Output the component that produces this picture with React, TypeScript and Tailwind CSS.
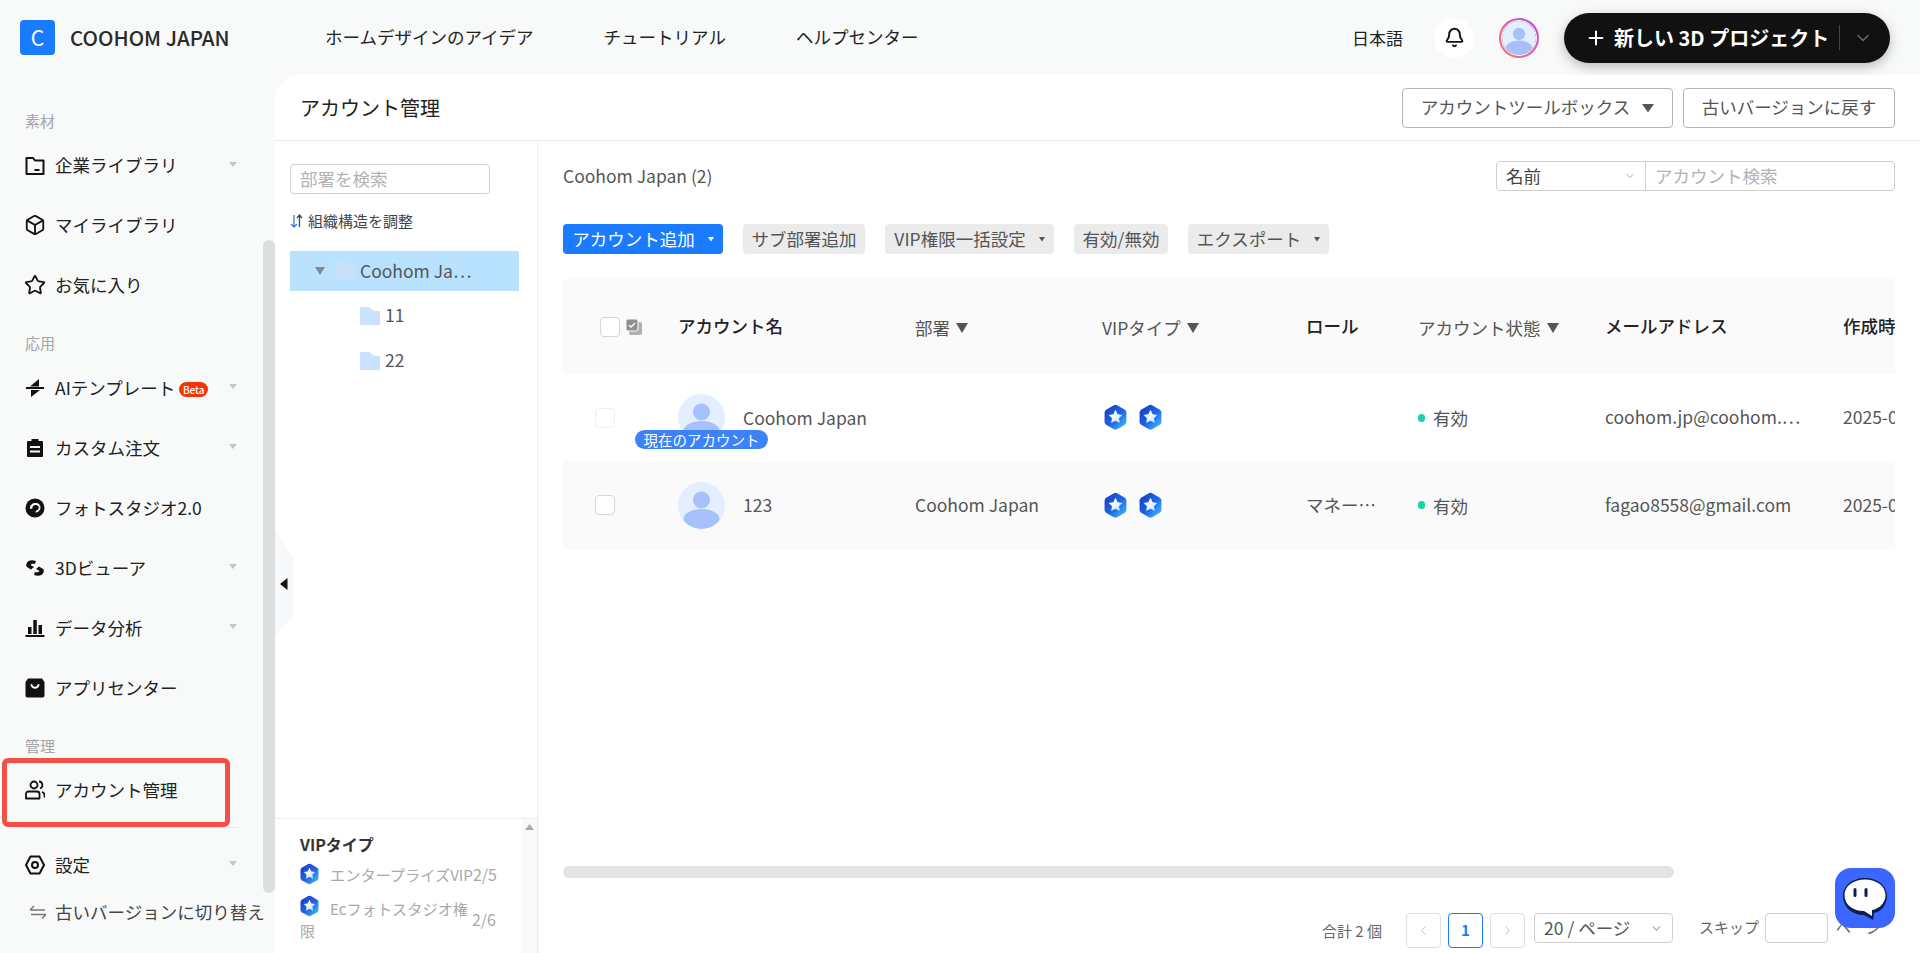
import React from "react";
import { Box, Star, Bell, ChevronDown, ChevronLeft, ChevronRight, Plus } from "lucide-react";

const FONT = "[font-family:'Noto_Sans_CJK_JP','Noto_Sans',sans-serif]";

const Caret = () => (
  <svg width="10" height="7" viewBox="0 0 10 7" className="ml-auto mr-[37px] mb-[3px] shrink-0">
    <path d="M1 1h8L5 6z" fill="#c4c6c8" />
  </svg>
);

const I = ({ children }: { children: React.ReactNode }) => (
  <svg width="20" height="20" viewBox="0 0 20 20" className="shrink-0">{children}</svg>
);

const icons: Record<string, React.ReactNode> = {
  folder: (
    <I>
      <path d="M1.500 2h6.500l2 2.500h8.500v13.500h-17z" fill="none" stroke="#111" strokeWidth="2" strokeLinejoin="round" />
      <path d="M9.500 14h5" stroke="#111" strokeWidth="2" />
    </I>
  ),
  box: <Box size={22} strokeWidth={2} color="#111" className="-mx-[1px] shrink-0" />,
  star: <Star size={22} strokeWidth={2} color="#111" className="-mx-[1px] shrink-0" />,
  ai: (
    <I>
      <path d="M1 10h18" stroke="#111" strokeWidth="2" />
      <path d="M14 1v7.500H5z" fill="#111" />
      <path d="M6 19v-7h9z" fill="#111" />
    </I>
  ),
  clip: (
    <I>
      <path d="M6.500 1h7v2H17a1 1 0 0 1 1 1v14a1 1 0 0 1-1 1H3a1 1 0 0 1-1-1V4a1 1 0 0 1 1-1h3.500z" fill="#111" />
      <path d="M5 9h10M5 13.500h10" stroke="#f8f9f9" strokeWidth="2" />
    </I>
  ),
  photo: (
    <I>
      <circle cx="10" cy="10" r="9.500" fill="#111" />
      <circle cx="10.500" cy="9.500" r="2.200" fill="#111" />
      <path d="M5 11c-.5-3.500 2-6 5.500-6 3 0 5 2 5 4.500 0 3-2.500 5-5 5l.5-2c2 0 2.700-1.500 2.700-3S12.500 7 10.500 7 7 8.500 7.500 10.500z" fill="#f8f9f9" />
    </I>
  ),
  d3: (
    <I>
      <path d="M1.500 5.500C3 2 7 1.500 11 3l-1 3C8 5.500 6.500 5.500 5.500 7l3.500 2-3 2.500-4-2.500c-1-1-1-2.500-.5-3.500z" fill="#111" />
      <path d="M18.500 14.500C17 18 13 18.500 9 17l1-3c2 .5 3.500.5 4.500-1L11 11l3-2.500 4 2.500c1 1 1 2.500.5 3.500z" fill="#111" />
    </I>
  ),
  chart: (
    <I>
      <path d="M.5 17h19v2H.5z" fill="#111" />
      <path d="M3 9h3.500v7H3zM8.300 2h3.500v14H8.300zM13.500 7H17v9h-3.500z" fill="#111" />
    </I>
  ),
  bag: (
    <I>
      <path d="M3 .5h14l2.500 3.500v13.500a2 2 0 0 1-2 2h-15a2 2 0 0 1-2-2V4z" fill="#111" />
      <path d="M6.500 7c1 3.500 6 3.500 7 0" fill="none" stroke="#f8f9f9" strokeWidth="2" strokeLinecap="round" />
    </I>
  ),
  user: (
    <I>
      <circle cx="9" cy="5" r="3.500" fill="none" stroke="#111" strokeWidth="1.800" />
      <path d="M1 18.500V14a2.500 2.500 0 0 1 2.500-2.500H12a2.500 2.500 0 0 1 2.500 2.500v4.500z" fill="none" stroke="#111" strokeWidth="1.800" strokeLinejoin="round" />
      <path d="M14 1.500a3.500 3.500 0 0 1 1 6.800M17 12c1.500.5 2.500 1.500 2.500 3v2.500" fill="none" stroke="#111" strokeWidth="1.800" />
    </I>
  ),
  gear: (
    <I>
      <path d="M5.500 1.500h9l4.500 8.500-4.500 8.500h-9L1 10z" fill="none" stroke="#111" strokeWidth="2" strokeLinejoin="round" />
      <circle cx="10" cy="10" r="3" fill="none" stroke="#111" strokeWidth="2" />
    </I>
  ),
};

const NavItem = ({ icon, label, caret, beta, h = "h-[60px]" }: { icon: string; label: string; caret?: boolean; beta?: boolean; h?: string }) => (
  <div className={`flex items-center pl-[25px] text-[17.500px] text-[#222] ${h}`}>
    {icons[icon]}
    <span className="ml-[10px] whitespace-nowrap">{label}</span>
    {beta && (
      <span className="ml-[4px] mt-[3px] flex h-[15px] w-[29px] items-center justify-center rounded-full bg-[#f43404] text-[10px] font-medium text-white">Beta</span>
    )}
    {caret && <Caret />}
  </div>
);

const SectionLabel = ({ children }: { children: React.ReactNode }) => (
  <div className="flex h-[43px] items-end pb-[4px] pl-[25px] text-[15px] text-[#a2a4a6]">{children}</div>
);

const Badge = ({ size = 20, id }: { size?: number; id: string }) => (
  <svg width={size} height={size * 1.150} viewBox="0 0 20 23" className="block shrink-0">
    <defs>
      <linearGradient id={id} x1="0.100" y1="0.100" x2="0.900" y2="0.900">
        <stop offset="0" stopColor="#1a40c8" />
        <stop offset="0.550" stopColor="#1f66e6" />
        <stop offset="1" stopColor="#3fb4f6" />
      </linearGradient>
      <linearGradient id={`${id}s`} x1="0" y1="0" x2="1" y2="1">
        <stop offset="0.300" stopColor="#ffffff" />
        <stop offset="1" stopColor="#b5defa" />
      </linearGradient>
    </defs>
    <path d="M8.600 1.100a3 3 0 0 1 2.800 0l6.800 3.800a3 3 0 0 1 1.300 2.400v8.400a3 3 0 0 1-1.300 2.400l-6.800 3.800a3 3 0 0 1-2.800 0l-6.800-3.800a3 3 0 0 1-1.300-2.400V7.300a3 3 0 0 1 1.300-2.400z" fill={`url(#${id})`} />
    <path d="M10 5l1.900 3.900 4.100.6-3 2.900.8 4.200-3.800-2-3.800 2 .8-4.200-3-2.900 4.100-.6z" fill={`url(#${id}s)`} />
  </svg>
);

const Avatar = ({ id, size = 47 }: { id: string; size?: number }) => (
  <svg width={size} height={size} viewBox="0 0 47 47" className="block shrink-0">
    <defs>
      <clipPath id={id}><circle cx="23.500" cy="23.500" r="23.500" /></clipPath>
    </defs>
    <circle cx="23.500" cy="23.500" r="23.500" fill="#e3eeff" />
    <circle cx="23.500" cy="18" r="8.500" fill="#a6c0fb" />
    <ellipse cx="23.500" cy="37" rx="18" ry="10" fill="#a6c0fb" clipPath={`url(#${id})`} />
  </svg>
);

const Folder = ({ pale }: { pale?: boolean }) => (
  <svg width="20" height="18" viewBox="0 0 20 18" className="shrink-0">
    <path d="M0 0h9l5 4h6v14H0z" fill={pale ? "#c8e1fb" : "#c9e2fd"} />
  </svg>
);

const Filter = () => (
  <svg width="12" height="10" viewBox="0 0 12 10" className="ml-[6px] shrink-0">
    <path d="M0 0h12L6 10z" fill="#555" />
  </svg>
);

const Tiny = ({ c = "#555" }: { c?: string }) => (
  <svg width="6" height="6" viewBox="0 0 6 6" className="ml-[13px] shrink-0">
    <path d="M0 1h6L3 5.500z" fill={c} />
  </svg>
);

const ToolBtn = ({ children, caret, primary, w }: { children: React.ReactNode; caret?: boolean; primary?: boolean; w: string }) => (
  <div className={`flex h-[30px] items-center justify-center whitespace-nowrap rounded-[4px] text-[17.500px] ${w} ${primary ? "bg-[#1a7bff] text-white" : "bg-[#ebebeb] text-[#555]"}`}>
    {children}
    {caret && <Tiny c={primary ? "#fff" : "#555"} />}
  </div>
);

const GRID = "grid grid-cols-[115px_237px_187px_204px_112px_187px_238px_200px] items-center";

const Status = () => (
  <div className="flex items-center text-[17.500px] text-[#555]">
    <span className="mr-[8px] h-[8px] w-[7px] rounded-full bg-[#16d2a5]" />
    <span className="mt-[2px]">有効</span>
  </div>
);

const PageBox = ({ children, active }: { children: React.ReactNode; active?: boolean }) => (
  <div className={`flex h-[35px] w-[35px] items-center justify-center rounded-[4px] border bg-white ${active ? "border-[#1a7bff] font-semibold text-[#1a7bff]" : "border-[#dedede] text-[#bcbcbc]"}`}>{children}</div>
);

export default function App() {
  return (
    <div className={`${FONT} relative h-[953px] w-[1920px] overflow-hidden bg-[#f8f9f9] text-[#333]`}>
      {/* Top bar */}
      <header className="flex h-[75px] items-center pl-[20px] pr-[30px]">
        <div className="flex h-[35px] w-[35px] items-center justify-center rounded-[4px] bg-[#1a7bff] text-[21px] text-white">C</div>
        <div className="ml-[15px] w-[255px] whitespace-nowrap text-[20.500px] font-medium text-[#2a2a2a]">COOHOM JAPAN</div>
        <nav className="flex gap-[70px] text-[17.500px] text-[#222]">
          <span>ホームデザインのアイデア</span>
          <span>チュートリアル</span>
          <span>ヘルプセンター</span>
        </nav>
        <div className="ml-auto flex items-center">
          <span className="-ml-[1px] mr-[1px] text-[17px] text-[#222]">日本語</span>
          <div className="ml-[30px] flex h-[40px] w-[40px] items-center justify-center rounded-full bg-white">
            <Bell size={21} strokeWidth={2.200} color="#111" />
          </div>
          <div className="ml-[25px] h-[40px] w-[40px] rounded-full bg-gradient-to-tr from-[#f5795a] to-[#b93fe0] p-[2px]">
            <div className="h-full w-full overflow-hidden rounded-full border border-white"><Avatar id="hdr" size={34} /></div>
          </div>
          <div className="ml-[25px] flex h-[50px] w-[326px] items-center rounded-full bg-[#111] pl-[21px] text-white shadow-[0_4px_12px_rgba(0,0,0,0.25)]">
            <Plus size={22} strokeWidth={2.200} color="#fff" />
            <span className="ml-[7px] whitespace-nowrap text-[20px] font-bold">新しい 3D プロジェクト</span>
            <span className="ml-auto h-[25px] w-px bg-[#444]" />
            <ChevronDown size={20} color="#666" className="ml-[13px] mr-[17px]" />
          </div>
        </div>
      </header>

      <div className="flex h-[878px]">
        {/* Sidebar */}
        <aside className="relative h-full w-[275px] shrink-0 overflow-hidden pt-[18px]">
          <SectionLabel>素材</SectionLabel>
          <NavItem icon="folder" label="企業ライブラリ" caret h="h-[59px]" />
          <NavItem icon="box" label="マイライブラリ" />
          <NavItem icon="star" label="お気に入り" />
          <SectionLabel>応用</SectionLabel>
          <NavItem icon="ai" label="AIテンプレート" caret beta />
          <NavItem icon="clip" label="カスタム注文" caret />
          <NavItem icon="photo" label="フォトスタジオ2.0" />
          <NavItem icon="d3" label="3Dビューア" caret />
          <NavItem icon="chart" label="データ分析" caret />
          <NavItem icon="bag" label="アプリセンター" />
          <SectionLabel>管理</SectionLabel>
          <div className="-mt-[1px]"><NavItem icon="user" label="アカウント管理" /></div>
          <div className="ml-[25px] mr-[37px] mt-[7px] h-px bg-[#e8e9ea]" />
          <div className="mt-[7px]"><NavItem icon="gear" label="設定" caret /></div>
          <div className="flex h-[34px] items-center whitespace-nowrap pl-[29px] text-[17.500px] text-[#444]">
            <svg width="18" height="14" viewBox="0 0 18 14" className="shrink-0">
              <path d="M1 5h15M1 5l4-4M17 9.500H2M17 9.500l-4 4" fill="none" stroke="#777" strokeWidth="1.500" />
            </svg>
            <span className="ml-[8px]">古いバージョンに切り替え</span>
          </div>
          <div className="absolute right-0 top-[165px] h-[653px] w-[12px] rounded-[6px] bg-[#dcdee0]" />
          <div className="absolute left-[2px] top-[683px] h-[69px] w-[228px] rounded-[6px] border-[5px] border-[#f44f46]" />
        </aside>

        {/* Main */}
        <main className="relative flex h-full min-w-0 flex-1 flex-col rounded-tl-[24px] bg-white">
          <div className="flex h-[66px] shrink-0 items-center border-b border-[#e8e8e8] pl-[25px] pr-[25px]">
            <h1 className="text-[20px] font-normal text-[#222]">アカウント管理</h1>
            <div className="ml-auto flex gap-[10px] text-[17.500px] text-[#555]">
              <div className="flex h-[40px] w-[271px] items-center justify-center rounded-[4px] border border-[#b5b5b5]">
                アカウントツールボックス
                <svg width="12" height="10" viewBox="0 0 12 10" className="ml-[12px]"><path d="M0 1h12L6 9.500z" fill="#555" /></svg>
              </div>
              <div className="flex h-[40px] w-[212px] items-center justify-center rounded-[4px] border border-[#b5b5b5]">古いバージョンに戻す</div>
            </div>
          </div>

          <div className="flex min-h-0 flex-1">
            {/* Tree */}
            <section className="flex w-[263px] shrink-0 flex-col border-r border-[#ededed]">
              <div className="flex-1 pl-[15px] pr-[18px] pt-[23px]">
                <div className="flex h-[30px] w-[200px] items-center rounded-[4px] border border-[#cfcfcf] pl-[9px] text-[17.500px] text-[#b3b3b3]">部署を検索</div>
                <div className="mt-[12px] flex h-[30px] items-center text-[15px] text-[#444]">
                  <svg width="14" height="14" viewBox="0 0 14 14" className="mr-[4px] shrink-0">
                    <path d="M4 1v12M1 10l3 3 3-3" fill="none" stroke="#2f7bf0" strokeWidth="1.300" />
                    <path d="M9.500 13V1M7 4l2.500-3L12 4" fill="none" stroke="#444" strokeWidth="1.300" />
                  </svg>
                  組織構造を調整
                </div>
                <div className="mt-[15px] flex h-[40px] w-[229px] items-center bg-[#b8e2fd] pl-[25px] text-[17.500px] text-[#555]">
                  <svg width="10" height="8" viewBox="0 0 10 8" className="mr-[10px]"><path d="M0 0h10L5 8z" fill="#808b94" /></svg>
                  <Folder pale />
                  <span className="ml-[5px]">Coohom Ja⋯</span>
                </div>
                <div className="mt-[2px] flex h-[45px] items-center pl-[70px] text-[17.500px] text-[#555]">
                  <Folder /><span className="ml-[5px]">11</span>
                </div>
                <div className="flex h-[45px] items-center pl-[70px] text-[17.500px] text-[#555]">
                  <Folder /><span className="ml-[5px]">22</span>
                </div>
              </div>
              <div className="relative h-[135px] shrink-0 overflow-hidden border-t border-[#eeeeee] pl-[25px] pr-[41px] pt-[14px]">
                <div className="text-[16px] font-bold leading-[22px] text-[#333]">VIPタイプ</div>
                <div className="mt-[7px] flex items-center text-[15.200px] text-[#a9a9a9]">
                  <Badge id="vs1" size={19} />
                  <span className="ml-[11px] whitespace-nowrap">エンタープライズVIP</span>
                  <span className="ml-auto text-[16px]">2/5</span>
                </div>
                <div className="relative mt-[9px] text-[15.200px] leading-[24px] text-[#a9a9a9]">
                  <Badge id="vs2" size={19} />
                  <span className="absolute left-[30px] top-[1px] whitespace-nowrap">Ecフォトスタジオ権</span>
                  <span className="absolute right-0 top-[12px] text-[16px]">2/6</span>
                  <div className="mt-[1px]">限</div>
                </div>
                <div className="absolute right-0 top-0 h-full w-[15px] bg-[#f8f9fa]">
                  <svg width="9" height="6" viewBox="0 0 9 6" className="ml-[3px] mt-[5px]"><path d="M0 6h9L4.500 0z" fill="#a9a9a9" /></svg>
                </div>
              </div>
            </section>

            {/* Accounts */}
            <section className="relative min-w-0 flex-1 pl-[25px]">
              <div className="flex h-[83px] w-[1332px] items-start justify-between pt-[20px]">
                <div className="mt-[4px] text-[17.500px] leading-[22px] text-[#555]">Coohom Japan (2)</div>
                <div className="flex h-[30px] w-[399px] rounded-[4px] border border-[#cfcfcf] text-[17.500px]">
                  <div className="flex w-[149px] items-center border-r border-[#cfcfcf] pl-[9px] text-[#444]">
                    名前<ChevronDown size={12} color="#aaa" className="ml-auto mr-[9px]" />
                  </div>
                  <div className="flex items-center pl-[9px] text-[#b3b3b3]">アカウント検索</div>
                </div>
              </div>
              <div className="flex gap-[20px]">
                <ToolBtn primary caret w="w-[160px]">アカウント追加</ToolBtn>
                <ToolBtn w="w-[122px]">サブ部署追加</ToolBtn>
                <ToolBtn caret w="w-[169px]">VIP権限一括設定</ToolBtn>
                <ToolBtn w="w-[94px]">有効/無効</ToolBtn>
                <ToolBtn caret w="w-[141px]">エクスポート</ToolBtn>
              </div>

              <div className="mt-[25px] w-[1332px] overflow-hidden text-[17.500px]">
                <div className={`${GRID} h-[95px] bg-[#fafafa]`}>
                  <div className="flex items-center pl-[37px]">
                    <span className="h-[20px] w-[20px] rounded-[4px] border border-[#d5d5d5] bg-white" />
                    <svg width="18" height="18" viewBox="0 0 18 18" className="ml-[5px]">
                      <rect x="4" y="4" width="13" height="13" rx="2" fill="#b0b0b0" />
                      <rect x="1" y="1" width="12" height="12" rx="2" fill="#8f8f8f" stroke="#fafafa" />
                      <path d="M4 7l2 2 4-4" fill="none" stroke="#fff" strokeWidth="1.300" />
                    </svg>
                  </div>
                  <div className="font-medium text-[#222]">アカウント名</div>
                  <div className="flex items-center pt-[3px] text-[#555]">部署<Filter /></div>
                  <div className="flex items-center pt-[3px] text-[#555]">VIPタイプ<Filter /></div>
                  <div className="font-medium text-[#222]">ロール</div>
                  <div className="flex items-center pt-[3px] text-[#555]">アカウント状態<Filter /></div>
                  <div className="font-medium text-[#222]">メールアドレス</div>
                  <div className="whitespace-nowrap font-medium text-[#222]">作成時間</div>
                </div>

                <div className={`${GRID} relative h-[87px] text-[#555]`}>
                  <div className="pl-[32px]"><span className="block h-[20px] w-[20px] rounded-[4px] border border-[#efefef] bg-white" /></div>
                  <div className="flex items-center">
                    <Avatar id="a1" />
                    <span className="ml-[18px] whitespace-nowrap pt-[1px]">Coohom Japan</span>
                  </div>
                  <div />
                  <div className="flex gap-[12px] pl-[2px]"><Badge id="b1" size={23} /><Badge id="b2" size={23} /></div>
                  <div />
                  <Status />
                  <div className="whitespace-nowrap">coohom.jp@coohom.⋯</div>
                  <div className="whitespace-nowrap">2025-06-12</div>
                  <div className="absolute left-[72px] top-[56px] flex h-[19px] w-[133px] items-center justify-center whitespace-nowrap rounded-full bg-[#3d82f6] text-[14.500px] text-white">現在のアカウント</div>
                </div>

                <div className={`${GRID} h-[88px] bg-[#fafafa] text-[#555]`}>
                  <div className="pl-[32px]"><span className="block h-[20px] w-[20px] rounded-[4px] border border-[#d5d5d5] bg-white" /></div>
                  <div className="flex items-center">
                    <Avatar id="a2" />
                    <span className="ml-[18px]">123</span>
                  </div>
                  <div>Coohom Japan</div>
                  <div className="flex gap-[12px] pl-[2px]"><Badge id="b3" size={23} /><Badge id="b4" size={23} /></div>
                  <div>マネー⋯</div>
                  <Status />
                  <div className="whitespace-nowrap">fagao8558@gmail.com</div>
                  <div className="whitespace-nowrap">2025-06-12</div>
                </div>
              </div>

              <div className="mt-[317px] h-[12px] w-[1111px] rounded-full bg-[#e3e3e3]" />

              <div className="mt-[35px] flex w-[1332px] items-start text-[15px] text-[#666]">
                <span className="ml-[759px] mt-[7px] whitespace-nowrap">合計 2 個</span>
                <div className="ml-[24px] flex gap-[7px]">
                  <PageBox><ChevronLeft size={15} strokeWidth={1.500} /></PageBox>
                  <PageBox active>1</PageBox>
                  <PageBox><ChevronRight size={15} strokeWidth={1.500} /></PageBox>
                </div>
                <div className="ml-[9px] flex h-[30px] w-[139px] items-center rounded-[4px] border border-[#cfcfcf] pl-[9px] text-[17.500px] text-[#555]">
                  20 / ページ<ChevronDown size={13} color="#aaa" className="ml-auto mr-[9px]" />
                </div>
                <span className="ml-[26px] mt-[3px] whitespace-nowrap">スキップ</span>
                <div className="ml-[6px] h-[30px] w-[63px] rounded-[4px] border border-[#cfcfcf]" />
                <span className="ml-[8px] mt-[3px] whitespace-nowrap">ページ</span>
              </div>

              {/* Chat bubble */}
              <div className="absolute left-[1297px] top-[727px] h-[60px] w-[60px] rounded-[16px] bg-[#3b66ff]">
                <svg width="60" height="60" viewBox="0 0 60 60">
                  <path d="M30 10C43 10 52 18 52 28c0 9-6 16-13 17l-1 7-9-5C17 47 8 39 8 28 8 18 17 10 30 10z" fill="#0c1f4f" />
                  <path d="M30 11.500c12 0 20.500 7 20.500 15.500 0 8-6.500 14-13.500 15v6l-8-5c-11 0-19.500-6-19.500-16C9.500 18.500 18 11.500 30 11.500z" fill="#fff" />
                  <path d="M20 21.500v6M31 21.500v6" stroke="#0c1f4f" strokeWidth="3" strokeLinecap="round" />
                </svg>
              </div>
            </section>
          </div>

          {/* Collapse handle */}
          <div className="absolute left-0 top-[455px] flex h-[107px] w-[18px] items-center rounded-r-[14px] bg-[#f7f8fa] [clip-path:polygon(0_0,100%_25%,100%_80%,0_100%)]">
            <svg width="8" height="12" viewBox="0 0 8 12" className="ml-[5px]"><path d="M7.500 0v12L0 6z" fill="#111" /></svg>
          </div>
        </main>
      </div>
    </div>
  );
}
